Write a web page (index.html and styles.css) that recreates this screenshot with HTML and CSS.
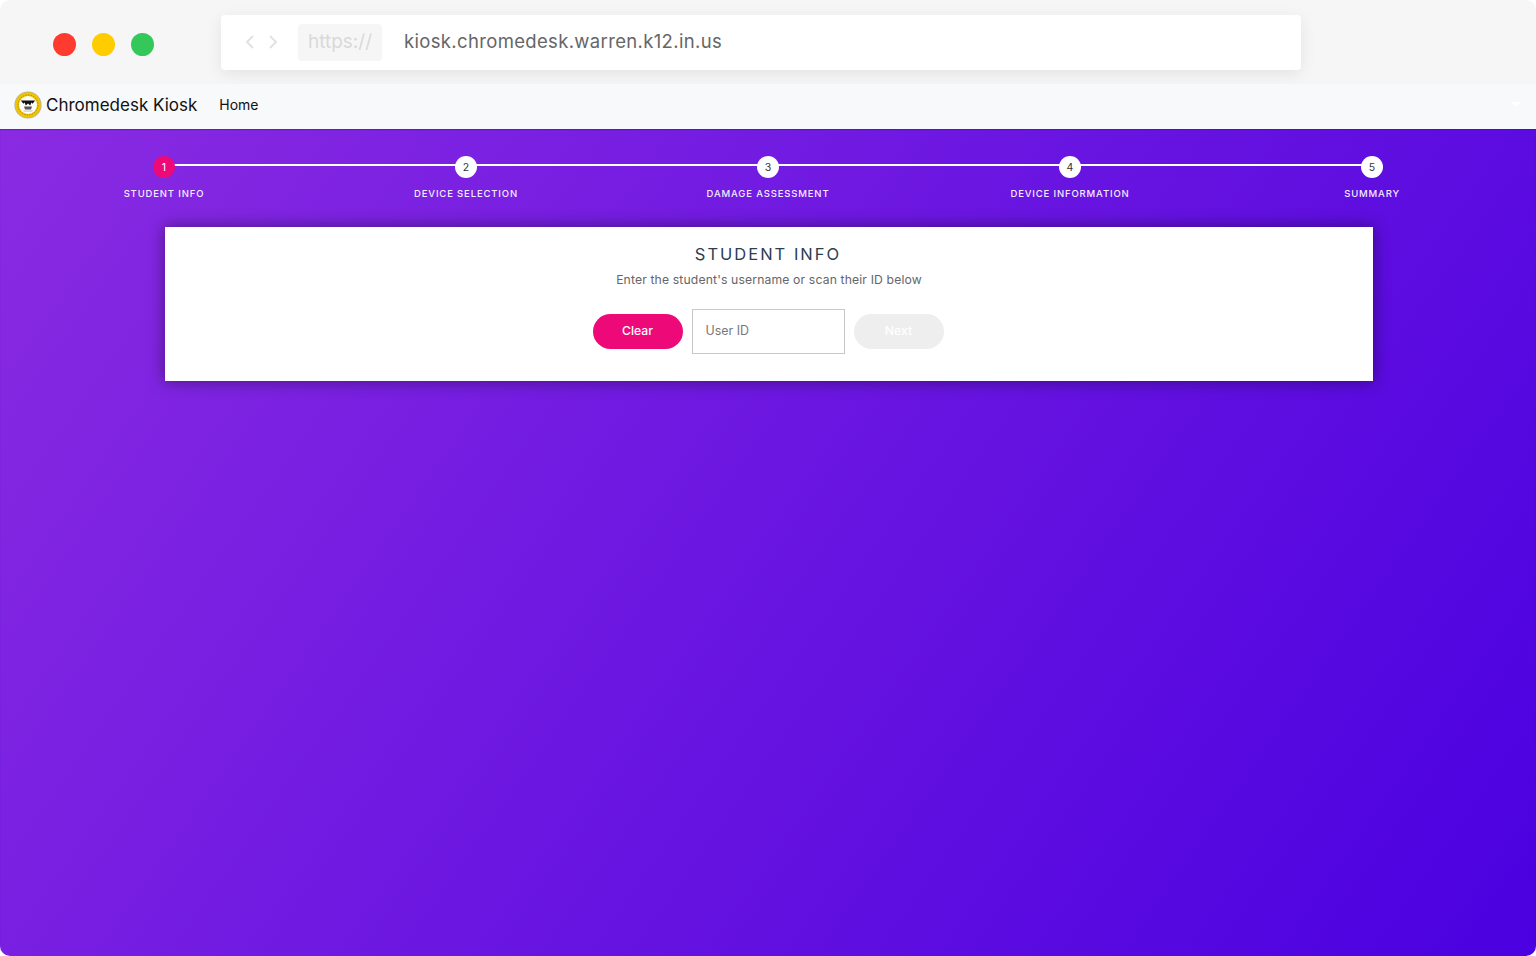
FILE: index.html
```html
<!DOCTYPE html>
<html>
	<head>
		<meta charset="UTF-8">
		<title>Chromedesk Kiosk</title>
		<link rel="stylesheet" href="styles.css">
	</head>
	<body>
		<div class="window">
			<div class="chrome">
				<div class="lights">
					<span class="light red"></span>
					<span class="light yellow"></span>
					<span class="light green"></span>
				</div>
				<div class="urlbar">
					<div class="arrows">
						<svg width="10" height="16" viewBox="0 0 10 16"><path d="M8 2 L2 8 L8 14" fill="none" stroke="#e2e2e2" stroke-width="2"/></svg>
						<svg width="10" height="16" viewBox="0 0 10 16"><path d="M2 2 L8 8 L2 14" fill="none" stroke="#e2e2e2" stroke-width="2"/></svg>
					</div>
					<div class="scheme">https://</div>
					<div class="url">kiosk.chromedesk.warren.k12.in.us</div>
				</div>
			</div>
			<nav class="navbar">
				<svg class="logo" width="28" height="28" viewBox="0 0 28 28">
					<circle cx="14" cy="14" r="13.6" fill="#b9b39a"/>
					<circle cx="14" cy="14" r="12.7" fill="#f0c400"/>
					<circle cx="14" cy="14" r="10" fill="none" stroke="#8a7410" stroke-width="0.7" stroke-dasharray="1.4 1.2"/>
					<circle cx="14" cy="14" r="9" fill="#fdfdfb"/>
					<path d="M6.8 9.6 L21.2 9.6 L18.6 12.8 L17.4 11.6 L16.2 14.6 L14 12.4 L11.8 14.6 L10.6 11.6 L9.4 12.8 Z" fill="#111"/>
					<path d="M10 15.6 H18 L17 18.6 H11 Z" fill="#555"/>
					<path d="M9.5 20 H18.5" stroke="#aaa" stroke-width="0.8"/>
				</svg>
				<a class="brand">Chromedesk Kiosk</a>
				<a class="navlink">Home</a>
				<span class="caret"></span>
			</nav>
			<main class="main">
				<ul class="steps">
					<li class="active"><span class="dot">1</span><span class="label">Student Info</span></li>
					<li><span class="dot">2</span><span class="label">Device Selection</span></li>
					<li><span class="dot">3</span><span class="label">Damage Assessment</span></li>
					<li><span class="dot">4</span><span class="label">Device Information</span></li>
					<li><span class="dot">5</span><span class="label">Summary</span></li>
				</ul>
				<section class="card">
					<h2>Student Info</h2>
					<p>Enter the student's username or scan their ID below</p>
					<div class="form-row">
						<button class="btn clear">Clear</button>
						<input class="userid" type="text" placeholder="User ID">
						<button class="btn next">Next</button>
					</div>
				</section>
			</main>
		</div>
	</body>
</html>
```

FILE: styles.css
```css
*{
	padding: 0;
	margin: 0;
	box-sizing: border-box;
}
body{
	background: #fff;
	font-family: Inter, "Liberation Sans", sans-serif;
}
.window{
	width: 1536px;
	height: 956px;
	border-radius: 10px;
	overflow: hidden;
	display: flex;
	flex-direction: column;
}
.chrome{
	height: 84px;
	flex: none;
	background: #f6f6f7;
	display: flex;
	align-items: flex-start;
	padding: 15px 0 0 53px;
}
.lights{
	display: flex;
	gap: 16px;
	margin-top: 18px;
	margin-right: 67px;
}
.light{
	width: 23px;
	height: 23px;
	border-radius: 50%;
}
.red{
	background: #ff3b30;
}
.yellow{
	background: #ffcc00;
}
.green{
	background: #34c759;
}
.urlbar{
	width: 1080px;
	height: 55px;
	background: #fff;
	border-radius: 4px;
	box-shadow: 0 4px 16px rgba(0,0,0,0.08);
	display: flex;
	align-items: center;
	padding-left: 24px;
}
.arrows{
	display: flex;
	gap: 13px;
	margin-right: 20px;
	padding-bottom: 2px;
}
.arrows svg{
	display: block;
}
.scheme{
	width: 84px;
	height: 37px;
	background: #f6f6f6;
	border-radius: 4px;
	color: #d9d9d9;
	font-size: 19px;
	line-height: 35px;
	text-align: center;
}
.url{
	margin-left: 22px;
	padding-bottom: 4px;
	color: #666;
	font-size: 18.5px;
	letter-spacing: 0.34px;
}
.navbar{
	height: 45px;
	flex: none;
	background: #f8f9fa;
	display: flex;
	align-items: center;
	padding: 0 0 4px 14px;
}
.logo{
	display: block;
	margin-right: 4px;
}
.brand{
	font-size: 17px;
	color: #111;
	margin-right: 22px;
}
.navlink{
	font-size: 14px;
	color: #111;
}
.caret{
	margin-left: auto;
	margin-right: 15px;
	border-left: 5px solid transparent;
	border-right: 5px solid transparent;
	border-top: 5px solid #fff;
}
.main{
	flex: 1;
	background: linear-gradient(125deg, #8a2be2, #4a00e0);
	padding: 27px 0 0 2px;
	box-shadow: inset 0 1px 1px rgba(70,0,200,0.5);
}
.steps{
	list-style: none;
	width: 1510px;
	margin-left: 11px;
	display: grid;
	grid-template-columns: repeat(5, 302px);
	height: 71px;
}
.steps li{
	position: relative;
	display: flex;
	flex-direction: column;
	align-items: center;
}
.steps li::before{
	content: "";
	position: absolute;
	left: 50%;
	width: 100%;
	top: 8px;
	height: 2px;
	background: #fff;
}
.steps li:last-child::before{
	display: none;
}
.dot{
	position: relative;
	width: 22px;
	height: 22px;
	border-radius: 50%;
	background: #fff;
	color: #333;
	font-size: 10.5px;
	line-height: 23px;
	text-align: center;
}
.active .dot{
	background: #ee0979;
	color: #fff;
}
.label{
	margin-top: 10px;
	color: #f3ecfc;
	font-size: 9.5px;
	line-height: 12px;
	font-weight: 500;
	text-transform: uppercase;
	letter-spacing: 0.85px;
	white-space: nowrap;
}
.card{
	width: 1208px;
	height: 154px;
	margin: 0 auto;
	background: #fff;
	box-shadow: 0 0 15px 1px rgba(0,0,0,0.4);
	display: flex;
	flex-direction: column;
	align-items: center;
	padding-top: 17px;
}
.card h2{
	margin-right: 2px;
	font-size: 16.5px;
	line-height: 20px;
	font-weight: 400;
	color: #2c3e50;
	text-transform: uppercase;
	letter-spacing: 2px;
}
.card p{
	margin-top: 8px;
	font-size: 12.2px;
	line-height: 16px;
	color: #666;
	letter-spacing: 0.14px;
}
.form-row{
	display: flex;
	align-items: center;
	gap: 9px;
	margin: 21px 2px 0 0;
}
.btn{
	width: 90px;
	height: 35px;
	border: none;
	border-radius: 18px;
	padding-bottom: 2px;
	font-family: inherit;
	font-size: 12.2px;
	font-weight: 500;
	color: #fff;
}
.clear{
	background: #ee0979;
}
.next{
	background: #eee;
}
.userid{
	width: 153px;
	height: 45px;
	border: 1px solid #c8c8c8;
	padding: 0 13px 2px;
	font-family: inherit;
	font-size: 12.4px;
	color: #666;
	outline: none;
}
.userid::placeholder{
	color: #777;
	opacity: 1;
}
```
